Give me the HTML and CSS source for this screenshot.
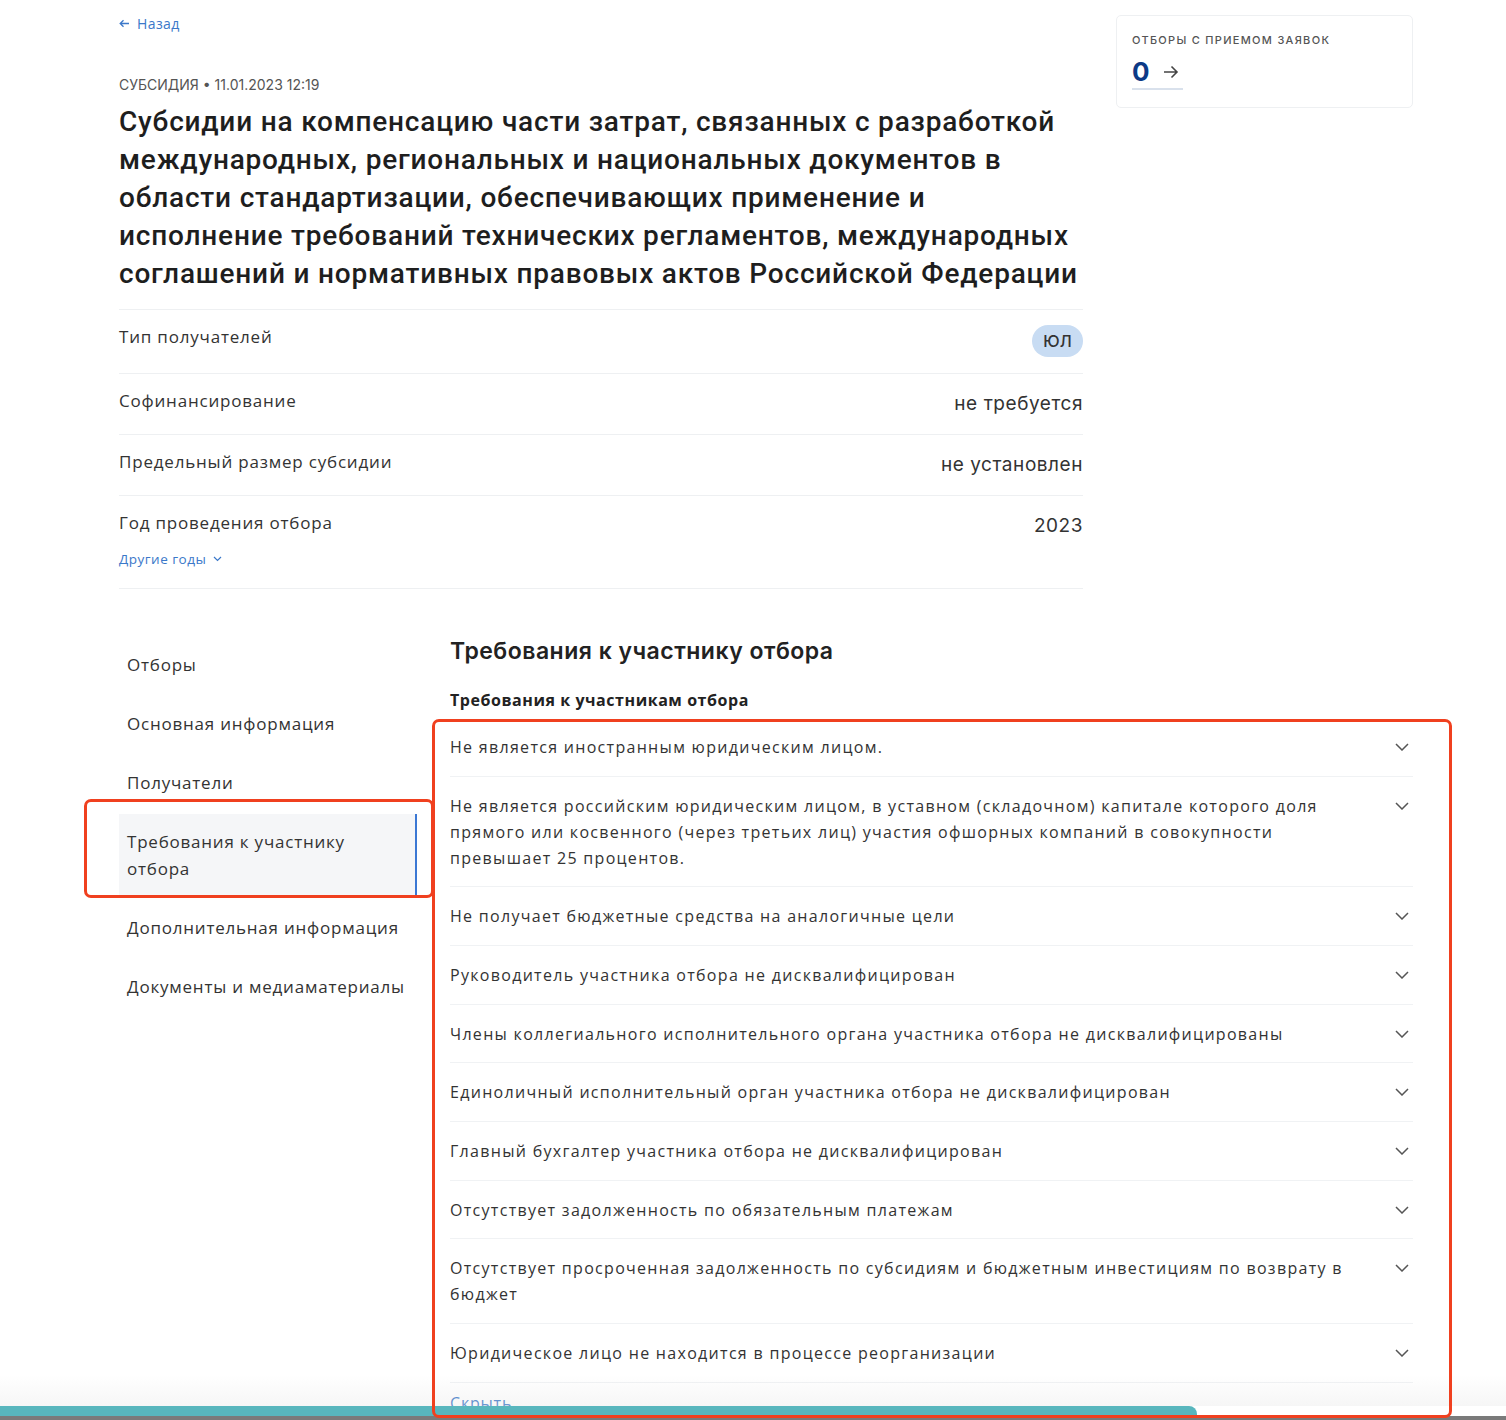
FILE: index.html
```html
<!DOCTYPE html>
<html lang="ru">
<head>
<meta charset="utf-8">
<title>Субсидия</title>
<link rel="stylesheet" href="styles.css">
</head>
<body>
<div class="page">
  <div class="top">
    <div class="main">
      <a class="back" href="#"><svg width="11" height="9" viewBox="0 0 11 9"><path d="M10 4.5H1.5M4.5 1.2L1.2 4.5l3.3 3.3" fill="none" stroke="#3b78c9" stroke-width="1.3"/></svg>Назад</a>
      <div class="meta">СУБСИДИЯ • 11.01.2023 12:19</div>
      <h1 class="title">Субсидии на компенсацию части затрат, связанных с разработкой международных, региональных и национальных документов в области стандартизации, обеспечивающих применение и исполнение требований технических регламентов, международных соглашений и нормативных правовых актов Российской Федерации</h1>
      <div class="props">
        <div class="prop prop-first">
          <div class="prop-label">Тип получателей</div>
          <span class="badge">ЮЛ</span>
        </div>
        <div class="prop">
          <div class="prop-label">Софинансирование</div>
          <div class="prop-value">не требуется</div>
        </div>
        <div class="prop">
          <div class="prop-label">Предельный размер субсидии</div>
          <div class="prop-value">не установлен</div>
        </div>
        <div class="prop prop-last">
          <div class="prop-left">
            <div class="prop-label">Год проведения отбора</div>
            <a class="years" href="#">Другие годы <svg width="9" height="6" viewBox="0 0 9 6"><path d="M1 1l3.5 3.5L8 1" fill="none" stroke="#3b78c9" stroke-width="1.2"/></svg></a>
          </div>
          <div class="prop-value">2023</div>
        </div>
      </div>
    </div>
    <aside class="card">
      <div class="card-label">ОТБОРЫ С ПРИЕМОМ ЗАЯВОК</div>
      <a class="card-count" href="#"><span class="num">0</span><svg width="18" height="16" viewBox="0 0 18 16"><path d="M2 8h13M9.5 2.5L15 8l-5.5 5.5" fill="none" stroke="#444" stroke-width="1.6"/></svg></a>
    </aside>
  </div>

  <div class="bottom">
    <nav class="nav">
      <a class="nav-item" href="#">Отборы</a>
      <a class="nav-item" href="#">Основная информация</a>
      <a class="nav-item" href="#">Получатели</a>
      <a class="nav-item active" href="#">Требования к участнику отбора</a>
      <a class="nav-item" href="#">Дополнительная информация</a>
      <a class="nav-item" href="#">Документы и медиаматериалы</a>
      <div class="mark mark-nav"></div>
    </nav>
    <section class="content">
      <h2 class="sec-title">Требования к участнику отбора</h2>
      <h3 class="sub-title">Требования к участникам отбора</h3>
      <div class="list">
        <div class="item"><div class="item-text">Не является иностранным юридическим лицом.</div><svg class="chev" width="14" height="8" viewBox="0 0 14 8"><path d="M1 1l6 6 6-6" fill="none" stroke="#555" stroke-width="1.5"/></svg></div>
        <div class="item"><div class="item-text">Не является российским юридическим лицом, в уставном (складочном) капитале которого доля прямого или косвенного (через третьих лиц) участия офшорных компаний в совокупности превышает 25 процентов.</div><svg class="chev" width="14" height="8" viewBox="0 0 14 8"><path d="M1 1l6 6 6-6" fill="none" stroke="#555" stroke-width="1.5"/></svg></div>
        <div class="item"><div class="item-text">Не получает бюджетные средства на аналогичные цели</div><svg class="chev" width="14" height="8" viewBox="0 0 14 8"><path d="M1 1l6 6 6-6" fill="none" stroke="#555" stroke-width="1.5"/></svg></div>
        <div class="item"><div class="item-text">Руководитель участника отбора не дисквалифицирован</div><svg class="chev" width="14" height="8" viewBox="0 0 14 8"><path d="M1 1l6 6 6-6" fill="none" stroke="#555" stroke-width="1.5"/></svg></div>
        <div class="item"><div class="item-text">Члены коллегиального исполнительного органа участника отбора не дисквалифицированы</div><svg class="chev" width="14" height="8" viewBox="0 0 14 8"><path d="M1 1l6 6 6-6" fill="none" stroke="#555" stroke-width="1.5"/></svg></div>
        <div class="item"><div class="item-text">Единоличный исполнительный орган участника отбора не дисквалифицирован</div><svg class="chev" width="14" height="8" viewBox="0 0 14 8"><path d="M1 1l6 6 6-6" fill="none" stroke="#555" stroke-width="1.5"/></svg></div>
        <div class="item"><div class="item-text">Главный бухгалтер участника отбора не дисквалифицирован</div><svg class="chev" width="14" height="8" viewBox="0 0 14 8"><path d="M1 1l6 6 6-6" fill="none" stroke="#555" stroke-width="1.5"/></svg></div>
        <div class="item"><div class="item-text">Отсутствует задолженность по обязательным платежам</div><svg class="chev" width="14" height="8" viewBox="0 0 14 8"><path d="M1 1l6 6 6-6" fill="none" stroke="#555" stroke-width="1.5"/></svg></div>
        <div class="item"><div class="item-text">Отсутствует просроченная задолженность по субсидиям и бюджетным инвестициям по возврату в бюджет</div><svg class="chev" width="14" height="8" viewBox="0 0 14 8"><path d="M1 1l6 6 6-6" fill="none" stroke="#555" stroke-width="1.5"/></svg></div>
        <div class="item"><div class="item-text">Юридическое лицо не находится в процессе реорганизации</div><svg class="chev" width="14" height="8" viewBox="0 0 14 8"><path d="M1 1l6 6 6-6" fill="none" stroke="#555" stroke-width="1.5"/></svg></div>
        <a class="hide" href="#">Скрыть</a>
        <div class="mark mark-list"></div>
      </div>
    </section>
  </div>
</div>
<div class="screen-edge">
  <div class="fade"></div>
  <div class="teal"></div>
  <div class="gray"></div>
</div>
</body>
</html>
```

FILE: styles.css
```css
* { box-sizing: border-box; }
html, body { margin: 0; padding: 0; background: #fff; }
body {
  font-family: "Open Sans", "Noto Sans", sans-serif;
  color: #333;
  width: 1506px;
  height: 1420px;
  overflow: hidden;
  position: relative;
}
a { text-decoration: none; }

.page {
  padding: 11px 0 0 119px;
  width: 1413px;
}

.top {
  display: flex;
  gap: 33px;
  align-items: flex-start;
}
.main { width: 964px; }

.back {
  display: inline-flex;
  align-items: center;
  gap: 7px;
  font-size: 14px;
  line-height: 18px;
  color: #3b78c9;
  letter-spacing: 0.4px;
}
.meta {
  margin-top: 43px;
  font-family: "Inter", "Roboto", sans-serif;
  font-size: 14px;
  line-height: 18px;
  color: #555;
}
.title {
  margin: 9px 0 0;
  font-family: "Roboto", "Inter", sans-serif;
  font-weight: 500;
  font-size: 28px;
  line-height: 38px;
  color: #1e1e1e;
  letter-spacing: 0.8px;
}

.props { margin-top: 16px; }
.prop {
  display: flex;
  justify-content: space-between;
  align-items: flex-start;
  border-top: 1px solid #eef0f2;
  padding: 15px 0 15px;
}
.prop-first { padding-bottom: 16px; }
.prop-last { padding-bottom: 19px; border-bottom: 1px solid #eef0f2; }
.prop-label {
  font-size: 17px;
  line-height: 24px;
  color: #333;
  letter-spacing: 0.8px;
}
.prop-value {
  font-family: "Inter", "Liberation Sans", sans-serif;
  font-size: 19px;
  line-height: 30px;
  color: #333;
  letter-spacing: 0.55px;
}
.badge {
  display: inline-flex;
  align-items: center;
  justify-content: center;
  height: 32px;
  width: 51px;
  border-radius: 16px;
  background: #c8dcf3;
  font-family: "Inter", sans-serif;
  font-size: 16px;
  font-weight: 500;
  color: #333;
}
.years {
  display: inline-flex;
  align-items: center;
  gap: 7px;
  margin-top: 14px;
  font-size: 13.5px;
  line-height: 20px;
  color: #3b78c9;
  letter-spacing: 0.5px;
}

.card {
  width: 297px;
  height: 93px;
  margin-top: 4px;
  border: 1px solid #eef0f2;
  border-radius: 5px;
  padding: 16px 15px 0;
}
.card-label {
  font-family: "Inter", sans-serif;
  font-size: 11px;
  font-weight: 500;
  line-height: 16px;
  letter-spacing: 1.3px;
  color: #555;
}
.card-count {
  display: inline-flex;
  align-items: center;
  gap: 12px;
  margin-top: 8px;
  padding-bottom: 0;
  border-bottom: 2px solid #d9e1ec;
  width: 51px;
}
.num {
  font-family: "Inter", sans-serif;
  font-size: 26px;
  font-weight: 700;
  line-height: 32px;
  color: #0d3a86;
}

.bottom {
  display: flex;
  gap: 33px;
  margin-top: 48px;
  align-items: flex-start;
}
.nav {
  width: 298px;
  display: flex;
  flex-direction: column;
  gap: 4px;
  position: relative;
}
.nav-item {
  padding: 14px 0 14px 8px;
  font-size: 17px;
  line-height: 27px;
  color: #333;
  letter-spacing: 0.78px;
  white-space: nowrap;
}
.nav-item.active {
  background: #f5f6f8;
  border-right: 2px solid #3b78d4;
  padding-right: 40px;
  white-space: normal;
}

.content { width: 963px; }
.sec-title {
  margin: -1px 0 0;
  font-family: "Inter", "Roboto", sans-serif;
  font-weight: 600;
  font-size: 23px;
  line-height: 30px;
  color: #222;
  letter-spacing: 0.5px;
}
.sub-title {
  margin: 22px 0 6px;
  font-size: 16px;
  font-weight: 700;
  line-height: 24px;
  color: #222;
  letter-spacing: 0.55px;
}
.list { position: relative; }
.item {
  display: flex;
  align-items: flex-start;
  border-bottom: 1px solid #f0f2f4;
  padding: 16px 4px 15.67px 0;
}
.item-text {
  flex: 1;
  padding-right: 40px;
  font-size: 16px;
  line-height: 26px;
  letter-spacing: 1.3px;
  color: #333;
}
.chev { margin-top: 9px; flex: none; }
.hide {
  display: block;
  padding-top: 7px;
  font-size: 16px;
  line-height: 26px;
  color: #3b78c9;
  letter-spacing: 0.8px;
}

.mark {
  position: absolute;
  border: 3px solid #f0401f;
  border-radius: 7px;
  pointer-events: none;
}
.mark-nav { left: -35px; top: 162px; width: 350px; height: 99px; }
.mark-list { left: -18px; top: 1px; width: 1020px; height: 699px; z-index: 2; }

.screen-edge {
  position: absolute;
  left: 0;
  right: 0;
  bottom: 0;
  height: 45px;
  pointer-events: none;
}
.fade {
  position: absolute;
  left: 0; right: 0; top: 0; height: 31px;
  background: linear-gradient(to bottom, rgba(235,235,235,0), rgba(225,225,225,0.3));
}
.teal {
  position: absolute;
  left: 0; top: 31px; width: 1197px; height: 10px;
  background: #58b6bd;
  border-top-right-radius: 8px;
}
.gray {
  position: absolute;
  left: 0; right: 0; bottom: 0; height: 4px;
  background: #7a7a7a;
}
```
